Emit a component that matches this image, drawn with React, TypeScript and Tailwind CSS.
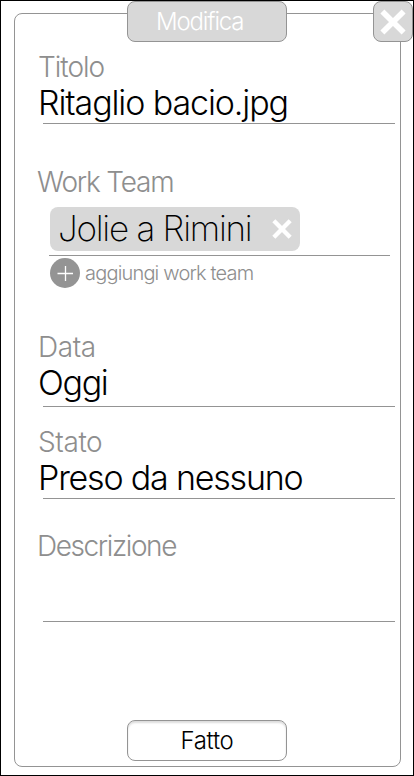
import type { ReactNode } from "react";

function Cross({ className }: { className: string }) {
  return (
    <svg viewBox="0 0 24 24" className={className} fill="none" stroke="#fff" strokeWidth="5.2" strokeLinejoin="round">
      <path d="M2.2 2.2L21.8 21.8M21.8 2.2L2.2 21.8" />
    </svg>
  );
}

function Label({ children, className }: { children: string; className: string }) {
  return (
    <div className="h-[34px]">
      <span className={"block w-fit whitespace-nowrap text-[28px] leading-[34px] text-[#8e8e8e] " + className}>{children}</span>
    </div>
  );
}

function Value({ children, className }: { children: string; className: string }) {
  return (
    <div className="-mt-px h-10">
      <span className={"block w-fit whitespace-nowrap text-[34px] leading-[40px] text-black " + className}>{children}</span>
    </div>
  );
}

function Field({ children, className }: { children: ReactNode; className: string }) {
  return (
    <section className={"-ml-px flex flex-col pl-6 " + className}>
      {children}
      <div className="mt-auto ml-[5px] h-px w-[352px] shrink-0 bg-[#949494]" />
    </section>
  );
}

export default function App() {
  return (
    <main className="relative h-[776px] w-[414px] overflow-hidden border border-black bg-white pt-3 pl-[13px] font-['Inter','Liberation_Sans',sans-serif] font-light">
      <div className="flex h-[754px] w-[387px] flex-col rounded-lg border border-[#949494]">
        <Field className="mt-9 h-[74px]">
          <Label className="tracking-[-1px]">Titolo</Label>
          <Value className="tracking-[-1.1px]">Ritaglio bacio.jpg</Value>
        </Field>

        <section className="mt-[41px] flex h-[123px] flex-col pl-[23px]">
          <Label className="-ml-px tracking-[-1.2px]">Work Team</Label>
          <div className="mt-2 ml-3 flex h-11 w-[250px] shrink-0 items-center justify-between rounded-lg bg-[#d8d8d8] pr-2 pl-2">
            <span className="whitespace-nowrap pb-0.5 text-[35px] leading-[42px] font-extralight tracking-[-1.25px] text-black">Jolie a Rimini</span>
            <Cross className="h-5 w-5 shrink-0" />
          </div>
          <div className="mt-1 ml-[11px] h-px w-[341px] shrink-0 bg-[#949494]" />
          <div className="mt-0.5 ml-3 flex h-[30px] shrink-0 items-center gap-[5px]">
            <svg viewBox="0 0 30 30" className="h-[30px] w-[30px] shrink-0">
              <circle cx="15" cy="15" r="15" fill="#949494" />
              <path d="M7.5 15.5H23M15.5 8V23" stroke="#fff" strokeWidth="1.3" fill="none" />
            </svg>
            <span className="whitespace-nowrap text-[20px] leading-[30px] tracking-[-0.82px] text-[#8e8e8e]">aggiungi work team</span>
          </div>
        </section>

        <Field className="mt-[42px] h-[77px]">
          <Label className="tracking-[-0.4px]">Data</Label>
          <Value className="tracking-[-1.3px]">Oggi</Value>
        </Field>
        <Field className="mt-[18px] h-[74px]">
          <Label className="tracking-[-0.4px]">Stato</Label>
          <Value className="tracking-[-1.2px]">Preso da nessuno</Value>
        </Field>
        <Field className="mt-[30px] h-[93px]">
          <Label className="-ml-px tracking-[-1.4px]">Descrizione</Label>
        </Field>

        <button className="mt-[98px] ml-28 flex h-[41px] w-40 shrink-0 items-center justify-center rounded-lg border border-[#949494] bg-white text-[24px] leading-[39px] text-black shadow-[inset_0_2px_2px_#ddd]">
          <span className="tracking-[-0.3px]">Fatto</span>
        </button>
      </div>

      <div className="absolute top-0 left-[126px] flex h-[41px] w-40 items-center rounded-lg border border-[#949494] bg-[#d8d8d8] pl-7 text-[24px] leading-[39px] text-white">
        <span className="tracking-[-1.15px]">Modifica</span>
      </div>
      <button aria-label="Chiudi" className="absolute top-0 left-[372px] flex h-[41px] w-10 items-center justify-center rounded-lg border border-[#949494] bg-[#d8d8d8]">
        <Cross className="h-[26px] w-[26px]" />
      </button>
    </main>
  );
}
